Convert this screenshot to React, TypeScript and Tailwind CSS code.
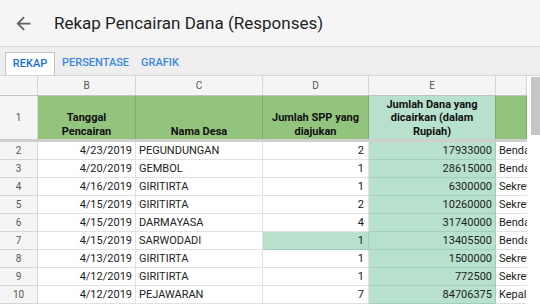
import React from "react";

type Row = {
  n: string;
  date: string;
  desa: string;
  spp: string;
  dana: string;
  jabatan: string;
  hl?: boolean;
};

const rows: Row[] = [
  { n: "2", date: "4/23/2019", desa: "PEGUNDUNGAN", spp: "2", dana: "17933000", jabatan: "Bendahara Desa" },
  { n: "3", date: "4/20/2019", desa: "GEMBOL", spp: "1", dana: "28615000", jabatan: "Bendahara Desa" },
  { n: "4", date: "4/16/2019", desa: "GIRITIRTA", spp: "1", dana: "6300000", jabatan: "Sekretaris Desa" },
  { n: "5", date: "4/15/2019", desa: "GIRITIRTA", spp: "2", dana: "10260000", jabatan: "Sekretaris Desa" },
  { n: "6", date: "4/15/2019", desa: "DARMAYASA", spp: "4", dana: "31740000", jabatan: "Bendahara Desa" },
  { n: "7", date: "4/15/2019", desa: "SARWODADI", spp: "1", dana: "13405500", jabatan: "Bendahara Desa", hl: true },
  { n: "8", date: "4/13/2019", desa: "GIRITIRTA", spp: "1", dana: "1500000", jabatan: "Sekretaris Desa" },
  { n: "9", date: "4/12/2019", desa: "GIRITIRTA", spp: "1", dana: "772500", jabatan: "Sekretaris Desa" },
  { n: "10", date: "4/12/2019", desa: "PEJAWARAN", spp: "7", dana: "84706375", jabatan: "Kepala Desa" },
];

const cols = "grid grid-cols-[38px_98px_127px_106px_127px_31px]";

const HeadCell = ({ children, bg }: { children: React.ReactNode; bg: string }) => (
  <div
    className={`${bg} flex items-end justify-center border-r border-[#7fae6a] px-[3px] pb-[1px] text-center text-[11px] font-bold leading-[13.5px] text-[#111]`}
  >
    <span>{children}</span>
  </div>
);

export default function App() {
  return (
    <div className="flex h-[304px] w-[540px] flex-col overflow-hidden bg-white font-['Roboto',sans-serif]">
      {/* toolbar */}
      <div className="flex h-[47px] shrink-0 items-center border-b border-[#dadada] bg-[#f5f5f5]">
        <svg viewBox="0 0 24 24" className="ml-[13px] h-[21px] w-[21px] fill-[#616161]">
          <path d="M20 11H7.83l5.59-5.59L12 4l-8 8 8 8 1.41-1.41L7.83 13H20v-2z" />
        </svg>
        <h1 className="ml-[20px] text-[17px] leading-none text-[#1f1f1f]">Rekap Pencairan Dana (Responses)</h1>
      </div>

      {/* sheet tabs */}
      <div className="flex h-[29px] shrink-0 items-end border-b border-[#d4d4d4] bg-[#eeeeee] pl-[5px]">
        <div className="flex h-[23px] w-[50px] items-center justify-center border border-b-0 border-[#c4c4c4] bg-white text-[11px] font-medium text-[#1b6fd0]">
          REKAP
        </div>
        <div className="flex h-[23px] items-center pl-[7px] pr-[5px] text-[11px] font-medium text-[#3a89e0]">PERSENTASE</div>
        <div className="flex h-[23px] items-center px-[7px] text-[11px] font-medium text-[#3a89e0]">GRAFIK</div>
      </div>

      <div className="flex min-h-0 flex-1">
        <div className="w-[527px] overflow-hidden">
          {/* column letters */}
          <div className={`${cols} h-[20px] border-b border-[#c2c2c2] bg-[#f5f5f5] text-[10px] text-[#555]`}>
            <div className="border-r border-[#d6d6d6]" />
            {["B", "C", "D", "E", ""].map((c, i) => (
              <div key={i} className="flex items-center justify-center border-r border-[#d6d6d6]">
                {c}
              </div>
            ))}
          </div>

          {/* header row */}
          <div className={`${cols} h-[46px] border-b-[3px] border-[#cfcfcf]`}>
            <div className="flex items-center justify-center border-r border-[#d6d6d6] bg-[#f5f5f5] text-[10px] text-[#555]">
              1
            </div>
            <HeadCell bg="bg-[#93c47d]">
              Tanggal
              <br />
              Pencairan
            </HeadCell>
            <HeadCell bg="bg-[#93c47d]">Nama Desa</HeadCell>
            <HeadCell bg="bg-[#93c47d]">
              Jumlah SPP yang
              <br />
              diajukan
            </HeadCell>
            <HeadCell bg="bg-[#b7e1cd]">
              Jumlah Dana yang
              <br />
              dicairkan (dalam
              <br />
              Rupiah)
            </HeadCell>
            <HeadCell bg="bg-[#93c47d]">{""}</HeadCell>
          </div>

          {/* data rows */}
          {rows.map((r) => (
            <div key={r.n} className={`${cols} h-[18px] text-[11px] leading-[17px] text-[#222]`}>
              <div className="flex items-center justify-center border-r border-b border-[#d6d6d6] bg-[#f5f5f5] text-[10px] text-[#555]">
                {r.n}
              </div>
              <div className="border-r border-b border-[#e2e2e2] pr-[3px] text-right">{r.date}</div>
              <div className="border-r border-b border-[#e2e2e2] pl-[3px] whitespace-nowrap">{r.desa}</div>
              <div
                className={`border-r border-b pr-[4px] text-right ${
                  r.hl ? "border-[#a3cfba] bg-[#b7e1cd]" : "border-[#e2e2e2]"
                }`}
              >
                {r.spp}
              </div>
              <div className="border-r border-b border-[#a3cfba] bg-[#b7e1cd] pr-[3px] text-right">{r.dana}</div>
              <div className="overflow-hidden border-b border-[#e2e2e2] pl-[3px] whitespace-nowrap">{r.jabatan}</div>
            </div>
          ))}
        </div>

        {/* scrollbar */}
        <div className="w-[13px] bg-white pl-[4px] pt-[1px]">
          <div className="h-[58px] w-[9px] bg-[#c6c6c6]" />
        </div>
      </div>
    </div>
  );
}
